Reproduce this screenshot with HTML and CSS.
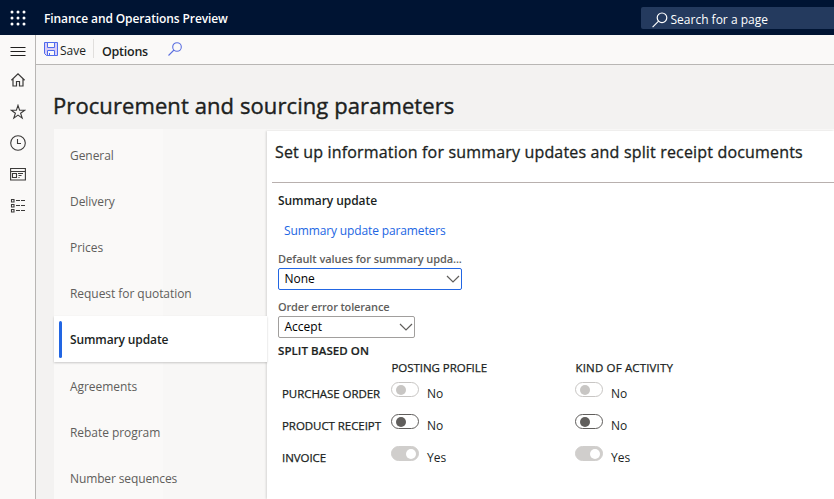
FILE: index.html
```html
<!DOCTYPE html>
<html lang="en">
<head>
<meta charset="utf-8">
<title>Procurement and sourcing parameters</title>
<link rel="stylesheet" href="styles.css">
</head>
<body>
<header class="topbar">
  <svg class="waffle" width="16" height="16" viewBox="0 0 16 16" fill="#fff"><circle cx="2" cy="2" r="1.5"/><circle cx="8" cy="2" r="1.5"/><circle cx="14" cy="2" r="1.5"/><circle cx="2" cy="8" r="1.5"/><circle cx="8" cy="8" r="1.5"/><circle cx="14" cy="8" r="1.5"/><circle cx="2" cy="14" r="1.5"/><circle cx="8" cy="14" r="1.5"/><circle cx="14" cy="14" r="1.5"/></svg>
  <span class="brand">Finance and Operations Preview</span>
  <div class="search">
    <svg width="16" height="16" viewBox="0 0 16 16" fill="none" stroke="#fff" stroke-width="1.2"><circle cx="10" cy="5.8" r="4.8"/><path d="M6.6 9.2L.6 15.2"/></svg>
    <span>Search for a page</span>
  </div>
</header>
<div class="shell">
  <aside class="rail">
    <svg width="16" height="16" viewBox="0 0 16 16" fill="none" stroke="#201f1e"><path d="M.5 4.5h15M.5 8.5h15M.5 12.5h15"/></svg>
    <svg width="16" height="16" viewBox="0 0 16 16" fill="none" stroke="#3b3a39" stroke-width="1.2"><path d="M1.4 8.3L8 1.9l6.6 6.4M3 7v7h3.5V9.5h3V14H13V7"/></svg>
    <svg width="16" height="16" viewBox="0 0 16 16" fill="none" stroke="#3b3a39" stroke-width="1.1"><path d="M8 1.3l1.6 4.9h5.1l-4.1 3 1.6 4.9L8 11.1l-4.2 3 1.6-4.9-4.1-3h5.1z"/></svg>
    <svg width="16" height="16" viewBox="0 0 16 16" fill="none" stroke="#3b3a39" stroke-width="1.1"><circle cx="8" cy="8" r="7.3"/><path d="M7.5 4v4.5H11"/></svg>
    <svg class="workspace" width="16" height="14" viewBox="0 0 16 14" fill="none" stroke="#3b3a39" stroke-width="1.1"><path d="M.6 1.5h14.8v11.500H.6zM.5 4.500h15M2.500 6.500h4v4h-4zM8 6.500h5M8.500 8.500h3M8.500 10.500h1"/></svg>
    <svg width="16" height="16" viewBox="0 0 16 16" fill="none" stroke="#3b3a39" stroke-width="1.1"><path d="M1.500 2.500h2.500v2.500h-2.500zM1.500 7.500h2.500v2.500h-2.500zM1.500 12.500h2.500v2.500h-2.500z"/><path d="M6 3.500h4M11 3.500h4M6 8.500h4M11 8.500h4M6 13.500h4M11 13.500h4"/></svg>
  </aside>
  <main class="main">
    <div class="toolbar">
      <svg width="14" height="14" viewBox="0 0 14 14" fill="none" stroke="#4f6bed"><path fill="#d9cdf7" d="M.5.5h13v13h-11l-2-2z"/><path fill="#faf9f8" d="M3.500.500h7v5h-7zM3.500 8.500h7v5h-7z"/><path d="M5.500 11v2"/></svg>
      <span class="save">Save</span>
      <span class="options">Options</span>
      <svg class="find" width="14" height="14" viewBox="0 0 14 14" fill="none" stroke="#5b6fe0" stroke-width="1.100"><circle cx="9" cy="5" r="4.300"/><path d="M6 8L.500 13.500"/></svg>
    </div>
    <h1>Procurement and sourcing parameters</h1>
    <div class="content">
      <nav class="tabs">
        <a>General</a><a>Delivery</a><a>Prices</a><a>Request for quotation</a><a class="active">Summary update</a><a>Agreements</a><a>Rebate program</a><a class="long">Number sequences</a>
      </nav>
      <section class="panel">
        <h2>Set up information for summary updates and split receipt documents</h2>
        <div class="form">
          <h3>Summary update</h3>
          <a class="link">Summary update parameters</a>
          <label class="label">Default values for summary upda...</label>
          <div class="select focus"><span>None</span><svg width="14" height="8" viewBox="0 0 14 8" fill="none" stroke="#605e5c" stroke-width="1.200"><path d="M1 1l6 6 6-6"/></svg></div>
          <label class="label second">Order error tolerance</label>
          <div class="select small"><span>Accept</span><svg width="14" height="8" viewBox="0 0 14 8" fill="none" stroke="#605e5c" stroke-width="1.200"><path d="M1 1l6 6 6-6"/></svg></div>
          <h4>SPLIT BASED ON</h4>
          <div class="grid">
            <span></span><b class="posting">POSTING PROFILE</b><b class="kind">KIND OF ACTIVITY</b>
            <span class="row-name">PURCHASE ORDER</span>
            <div class="toggle disabled"><i></i><span>No</span></div>
            <div class="toggle disabled"><i></i><span>No</span></div>
            <span class="row-name">PRODUCT RECEIPT</span>
            <div class="toggle"><i></i><span>No</span></div>
            <div class="toggle"><i></i><span>No</span></div>
            <span class="row-name">INVOICE</span>
            <div class="toggle on"><i></i><span>Yes</span></div>
            <div class="toggle on"><i></i><span>Yes</span></div>
          </div>
        </div>
      </section>
    </div>
  </main>
</div>
</body>
</html>
```
FILE: styles.css
```css
* { box-sizing: border-box; }
body { margin: 0; height: 499px; overflow: hidden; font: 12px/16px "Open Sans", "Noto Sans", sans-serif; color: #201f1e; background: #f3f2f1; }
h1, h2, h3, h4 { margin: 0; }
svg { display: block; flex: none; }
.topbar { display: flex; align-items: center; height: 35px; padding-left: 10px; background: #001433; color: #fff; }
.brand { margin-left: 18px; padding-top: 2px; font-weight: 600; letter-spacing: -.11px; white-space: nowrap; }
.search { display: flex; align-items: center; gap: 2px; width: 193px; height: 22px; margin-left: auto; padding-left: 11px; background: #243a5e; border-radius: 2px 0 0 2px; }
.search svg { margin-top: 4px; }
.search span { padding: 4px 0 0 .5px; }
.shell { display: flex; height: 464px; }
.rail { display: flex; flex-direction: column; align-items: center; gap: 15.4px; width: 36px; padding-top: 8px; background: #faf9f8; border-right: 1px solid #b8b6b4; }
.rail svg + svg { margin-top: -2px; }
.rail svg + svg + svg { margin-top: 0; }
.rail .workspace { margin-bottom: 1px; }
.main { flex: 1; min-width: 0; display: flex; flex-direction: column; }
.toolbar { display: flex; align-items: center; height: 30px; padding: 0 0 2px 8px; background: #faf9f8; border-bottom: 1px solid #b8b6b4; }
.save { margin-left: 2px; padding: 5px 7px 0 0; }
.options { height: 19px; padding: 4px 0 0 8px; border-left: 1px solid #e1dfdd; font-weight: 600; font-size: 12.5px; line-height: 17px; letter-spacing: -.25px; }
.find { margin-left: 20px; }
h1 { margin: 26px 0 0 17px; height: 38px; font-size: 22px; line-height: 29px; font-weight: 500; letter-spacing: .09px; -webkit-text-stroke: .4px currentColor; }
.content { flex: 1; display: flex; min-height: 0; margin-left: 18px; background: #faf9f8; }
.tabs { width: 213px; padding-top: 3px; color: #605e5c; background: linear-gradient(90deg, #faf9f8 109px, #f8f7f6 109px); }
.tabs a { display: flex; align-items: center; height: 46px; padding: 1px 0 0 16px; letter-spacing: -.05px; }
.tabs .long { letter-spacing: -.12px; }
.tabs .active { position: relative; margin-bottom: 1px; padding-left: 5px; background: #fff; color: #201f1e; font-weight: 600; letter-spacing: -.12px; box-shadow: 0 1px 2px #0003; }
.active::before { content: ""; width: 3px; height: 37px; margin-right: 8px; border-radius: 2px; background: #2266e3; }
.panel { flex: 1; min-width: 0; margin-top: 2px; padding-left: 5px; background: #fff; box-shadow: -1px 0 2px #0002; }
h2 { height: 52px; padding: 10px 0 0 3px; border-bottom: 1px solid #b8b0ae; font-size: 16px; line-height: 22px; font-weight: 500; letter-spacing: .17px; -webkit-text-stroke: .3px currentColor; white-space: nowrap; }
.form { display: flex; flex-direction: column; align-items: flex-start; padding: 10px 0 0 6px; }
h3 { font-size: 12px; line-height: 16px; font-weight: 600; letter-spacing: -.07px; }
.link { margin: 14px 0 0 6px; color: #2266e3; letter-spacing: -.13px; }
.label { margin-top: 12px; height: 17px; color: #605e5c; font-size: 11px; font-weight: 600; letter-spacing: -.08px; }
.label.second { margin-top: 9px; letter-spacing: -.16px; }
.select { display: flex; align-items: center; justify-content: space-between; width: 184px; height: 22px; border: 1px solid #a19f9d; border-radius: 2px; background: #fff; padding: 0 1px 0 5.5px; color: #000; }
.select.focus { border-color: #2266e3; }
.select.small { width: 137px; }
h4 { margin-top: 4px; font-size: 11.5px; line-height: 17px; height: 18px; font-weight: 600; letter-spacing: .07px; -webkit-text-stroke: .2px currentColor; }
.grid { display: grid; grid-template-columns: 113px 184px 1fr; grid-template-rows: 18px 32px 32px 32px; width: 500px; }
.grid b { padding-left: .5px; font-size: 11.5px; line-height: 16px; font-weight: 500; letter-spacing: -.05px; -webkit-text-stroke: .25px currentColor; }
.grid .kind { letter-spacing: .16px; }
.row-name { padding: 8px 0 0 4px; font-size: 11.5px; font-weight: 500; letter-spacing: -.06px; -webkit-text-stroke: .25px currentColor; white-space: nowrap; }
.toggle { display: flex; align-items: flex-start; }
.toggle i { display: flex; align-items: center; width: 28px; height: 15px; margin-top: 4px; padding-left: 4px; border: 1px solid #605e5c; border-radius: 8px; }
.toggle i::before { content: ""; width: 10px; height: 10px; border-radius: 50%; background: #605e5c; }
.toggle span { margin: 8px 0 0 8px; }
.disabled i { border-color: #c8c6c4; }
.disabled i::before { background: #c8c6c4; }
.on i { justify-content: flex-end; padding-right: 2px; border-color: #d0cecc; background: #d0cecc; }
.on i::before { background: #fff; }
```
